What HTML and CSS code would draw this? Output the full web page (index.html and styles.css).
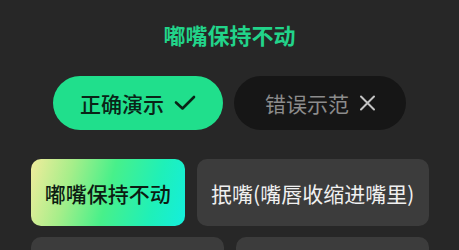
FILE: index.html
```html
<!DOCTYPE html>
<html lang="zh">
<head>
<meta charset="utf-8">
<link rel="stylesheet" href="styles.css">
</head>
<body>
<div class="page">
  <div class="title">嘟嘴保持不动</div>
  <div class="pills">
    <div class="pill pill-ok">
      <span>正确演示</span>
      <svg class="ico" width="22" height="16" viewBox="0 0 22 16"><path d="M2 7.5 L8.5 13.5 L20 2" fill="none" stroke="#0a2417" stroke-width="2.6" stroke-linecap="round" stroke-linejoin="round"/></svg>
    </div>
    <div class="pill pill-bad">
      <span>错误示范</span>
      <svg class="ico" width="17" height="16" viewBox="0 0 17 16"><path d="M2 1.5 L15 14.5 M15 1.5 L2 14.5" fill="none" stroke="#c4c4c4" stroke-width="2" stroke-linecap="round"/></svg>
    </div>
  </div>
  <div class="options">
    <div class="row">
      <div class="opt opt-active">嘟嘴保持不动</div>
      <div class="opt">抿嘴(嘴唇收缩进嘴里)</div>
    </div>
    <div class="row">
      <div class="opt opt-half"></div>
      <div class="opt opt-half"></div>
    </div>
  </div>
</div>
</body>
</html>
```

FILE: styles.css
```css
* { box-sizing: border-box; }
html, body {
  margin: 0;
  padding: 0;
  background: #272727;
  overflow: hidden;
}
body {
  font-family: "Noto Sans CJK SC", "Noto Sans", sans-serif;
  width: 459px;
  height: 250px;
}
.page {
  display: flex;
  flex-direction: column;
  align-items: center;
  padding-top: 19px;
}
.title {
  height: 30px;
  line-height: 30px;
  font-size: 22px;
  font-weight: 600;
  color: #22d48a;
}
.pills {
  display: flex;
  gap: 11px;
  margin-top: 27px;
}
.pill {
  height: 54px;
  border-radius: 27px;
  display: flex;
  align-items: center;
  gap: 10px;
  font-size: 21px;
  font-weight: 500;
}
.pill-ok {
  background: #20df8c;
  color: #0a2417;
  padding: 0 27px 0 27px;
}
.pill-bad {
  background: #161616;
  color: #8c8c8c;
  font-weight: 400;
  padding: 0 30px 0 31px;
}
.ico { display: block; }
.options {
  margin-top: 29px;
  width: 398px;
  display: flex;
  flex-direction: column;
  gap: 11px;
}
.row {
  display: flex;
  gap: 12px;
}
.opt {
  flex: 1 1 auto;
  height: 67px;
  border-radius: 10px;
  background: #3c3c3c;
  color: #f0f0f0;
  font-size: 21px;
  display: flex;
  align-items: center;
  justify-content: center;
  padding: 0 13px;
  white-space: nowrap;
}
.opt-half { flex: 1 1 0; }
.opt-active {
  background: linear-gradient(105deg, #f1ec9c 0%, #a6ee8a 25%, #48f08a 50%, #1ff0b8 78%, #14eedd 100%);
  color: #0c1c12;
  font-weight: 500;
}
```
